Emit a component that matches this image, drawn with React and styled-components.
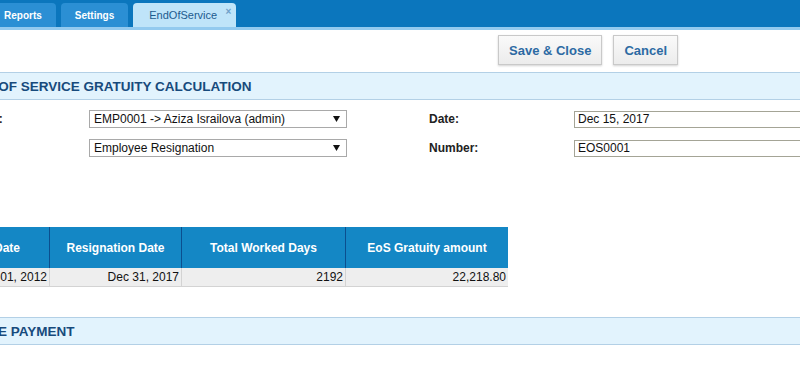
import React from 'react';
import styled, { createGlobalStyle } from 'styled-components';

const GlobalStyle = createGlobalStyle`
  html, body {
    margin: 0;
    padding: 0;
    background: #fff;
    font-family: "Liberation Sans", Arial, sans-serif;
    overflow: hidden;
  }
`;

const Viewport = styled.div`
  width: 800px;
  height: 374px;
  overflow: hidden;
  background: #fff;
`;

const TabBar = styled.div`
  display: flex;
  align-items: flex-end;
  gap: 5px;
  height: 27px;
  margin-left: -10px;
  background: #0b76bd;
  border-bottom: 3px solid #93caef;
`;

const Tab = styled.div`
  position: relative;
  display: flex;
  align-items: center;
  justify-content: ${p => (p.active ? 'flex-start' : 'center')};
  height: 24px;
  box-sizing: border-box;
  padding: ${p => (p.active ? '0 0 0 16px' : '0 14px')};
  width: ${p => (p.active ? '103px' : 'auto')};
  border-radius: 4px 4px 0 0;
  background: ${p => (p.active ? '#bfe4f9' : '#2b8fd4')};
  color: ${p => (p.active ? '#1d5b8f' : '#fff')};
  font-size: ${p => (p.active ? '11px' : '10px')};
  font-weight: ${p => (p.active ? 'normal' : 'bold')};
`;

const TabClose = styled.span`
  position: absolute;
  top: 3px;
  right: 5px;
  font-size: 10px;
  font-weight: bold;
  color: #6f9fc9;
`;

const Page = styled.div`
  margin-left: -85px;
  width: 1000px;
`;

const Toolbar = styled.div`
  display: flex;
  gap: 11px;
  padding: 5px 0 7px 583px;
`;

const Button = styled.button`
  height: 30px;
  padding: 0 10px;
  border: 1px solid #c9c9c9;
  background: linear-gradient(#fafafa, #ececec);
  box-shadow: 0 1px 2px rgba(0, 0, 0, 0.18);
  color: #2c6aa3;
  font-family: "Liberation Sans", Arial, sans-serif;
  font-size: 13px;
  font-weight: bold;
  cursor: pointer;
`;

const SectionHeader = styled.div`
  height: 26px;
  display: flex;
  align-items: center;
  padding-left: ${p => p.indent}px;
  background: #e2f3fd;
  border-top: 1px solid #b3d0e6;
  border-bottom: 1px solid #b3d0e6;
  color: #174a7c;
  font-size: 13.5px;
  font-weight: bold;
`;

const Form = styled.div`
  display: grid;
  grid-template-columns: 147px 258px 82px 145px 258px;
  grid-auto-rows: 18px;
  row-gap: 11px;
  align-items: center;
  padding: 10px 0 0 27px;
`;

const Label = styled.div`
  font-size: 12px;
  font-weight: bold;
  color: #222;
`;

const Spacer = styled.div``;

const SelectBox = styled.div`
  height: 18px;
  box-sizing: border-box;
  display: flex;
  align-items: center;
  justify-content: space-between;
  padding: 0 6px 0 4px;
  border: 1px solid #a9a9a9;
  font-size: 12px;
  color: #111;
`;

const Arrow = styled.svg`
  width: 7px;
  height: 6px;
`;

const TextInput = styled.input`
  height: 17px;
  box-sizing: border-box;
  width: 100%;
  padding: 0 3px;
  border: 1px solid #a4a496;
  font-family: "Liberation Sans", Arial, sans-serif;
  font-size: 12px;
  color: #111;
  outline: none;
`;

const Table = styled.table`
  margin: 70px 0 0 4px;
  border-collapse: collapse;
  font-size: 12px;
`;

const Th = styled.th`
  width: ${p => p.w}px;
  height: 41px;
  padding: 0;
  background: #1487c5;
  color: #fff;
  font-weight: bold;
  text-align: center;
  border-left: 1px solid #0b4f8f;
  &:first-child { border-left: none; }
`;

const Td = styled.td`
  height: 18px;
  padding: 0 2px 0 0;
  background: #eeeeee;
  color: #111;
  text-align: right;
  border-left: 1px solid #d3d3d3;
  border-bottom: 1px solid #d3d3d3;
  &:first-child { border-left: none; }
`;

const Gap = styled.div`
  height: 30px;
`;

function Select({ children }) {
  return (
    <SelectBox>
      <span>{children}</span>
      <Arrow viewBox="0 0 7 6">
        <polygon points="0,0 7,0 3.5,6" fill="#111" />
      </Arrow>
    </SelectBox>
  );
}

const columns = [
  { title: 'Joining Date', w: 130, value: 'Jan 01, 2012' },
  { title: 'Resignation Date', w: 131, value: 'Dec 31, 2017' },
  { title: 'Total Worked Days', w: 163, value: '2192' },
  { title: 'EoS Gratuity amount', w: 162, value: '22,218.80' },
];

export default function App() {
  return (
    <Viewport>
      <GlobalStyle />
      <TabBar>
        <Tab>Reports</Tab>
        <Tab>Settings</Tab>
        <Tab active>
          EndOfService
          <TabClose>×</TabClose>
        </Tab>
      </TabBar>
      <Page>
        <Toolbar>
          <Button>Save &amp; Close</Button>
          <Button>Cancel</Button>
        </Toolbar>
        <SectionHeader indent={51}>END OF SERVICE GRATUITY CALCULATION</SectionHeader>
        <Form>
          <Label>Employee:</Label>
          <Select>EMP0001 -&gt; Aziza Israilova (admin)</Select>
          <Spacer />
          <Label>Date:</Label>
          <TextInput readOnly value="Dec 15, 2017" />
          <Label>Type:</Label>
          <Select>Employee Resignation</Select>
          <Spacer />
          <Label>Number:</Label>
          <TextInput readOnly value="EOS0001" />
        </Form>
        <Table>
          <thead>
            <tr>
              {columns.map(c => (
                <Th key={c.title} w={c.w}>{c.title}</Th>
              ))}
            </tr>
          </thead>
          <tbody>
            <tr>
              {columns.map(c => (
                <Td key={c.title}>{c.value}</Td>
              ))}
            </tr>
          </tbody>
        </Table>
        <Gap />
        <SectionHeader indent={48}>LEAVE PAYMENT</SectionHeader>
      </Page>
    </Viewport>
  );
}
